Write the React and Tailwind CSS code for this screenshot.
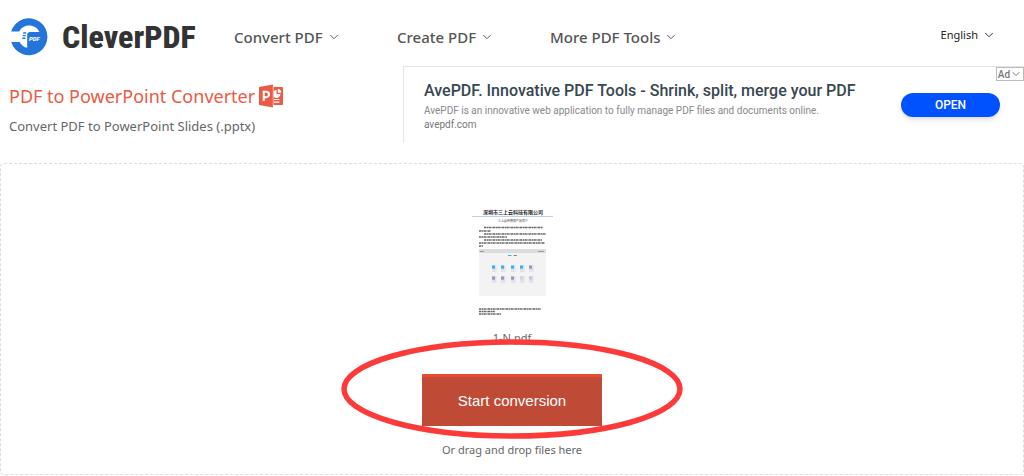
import { ChevronDown } from 'lucide-react';

const navItems = [
  { label: 'Convert PDF', href: '#convert', width: 'w-[163px]' },
  { label: 'Create PDF', href: '#create', width: 'w-[153px]' },
  { label: 'More PDF Tools', href: '#tools', width: 'w-auto' },
];

// file tiles in the document preview: x, y, fill
const previewTiles = [
  [492, 264, '#3bb3e8'], [501, 264, '#3bb3e8'], [511, 264, '#3bb3e8'], [520, 264, '#3bb3e8'], [529, 264, '#a48fc4'],
  [492, 275, '#a48fc4'], [501, 275, '#a48fc4'], [511, 275, '#a48fc4'], [520, 275, '#d5d5dc'], [529, 275, '#c9c0da'],
];

// paragraph lines in the document preview: x, y, length
const previewLines = [
  [484, 226.5, 59], [479, 230, 12], [484, 233, 62], [479, 236, 28],
  [484, 239, 58], [479, 242, 66], [479, 245, 4],
  [479, 308, 62], [479, 310.5, 16], [479, 313, 22],
];

function Logo() {
  return (
    <svg viewBox="0 0 38 38" className="h-[38px] w-[38px] shrink-0" aria-hidden="true">
      <path
        d="M1.2 13.5A18.5 18.5 0 1 1 1.2 24H9.6C11 27 14 29.4 17.2 29.8V17Q17.2 13.9 20.3 13.9H29.4C27.4 10 23.8 7.6 19 7.6C14.6 7.6 11 10 9.2 13.5Z"
        fill="#2474dc"
      />
      <path d="M13.2 15h3M12.8 17.6h3M12.4 20.2h3" stroke="#2474dc" strokeWidth="1.4" />
      <text x="19" y="22.5" fontSize="6" className="fill-white font-['Roboto',sans-serif] font-black italic">PDF</text>
    </svg>
  );
}

function PowerPointIcon() {
  return (
    <svg viewBox="0 0 24 24" className="h-6 w-6 shrink-0" aria-hidden="true">
      <path d="M14 3h9.2a.8.8 0 0 1 .8.8v16.4a.8.8 0 0 1-.8.8H14z" fill="#ea5a45" />
      <path d="M0 3L14 .5v23L0 21z" fill="#ea5a45" />
      <path d="M14.2 2v20" stroke="#fff" strokeWidth="0.6" />
      <path d="M17.5 6v4h4a4 4 0 0 1-6.8 2.8V7.2A4 4 0 0 1 17.5 6z" fill="#fff" />
      <path d="M18.8 5a3.8 3.8 0 0 1 3.5 3.7h-3.5z" fill="#fff" />
      <path d="M15 15.5h5.5M15 18.2h5.5" stroke="#fff" strokeWidth="1.2" />
      <path d="M4.7 17V7.8h2.6a2.6 2.6 0 0 1 0 5.4H4.7" fill="none" stroke="#fff" strokeWidth="2" />
    </svg>
  );
}

function DocumentPreview() {
  return (
    <svg viewBox="471 203 82 118" className="h-[118px] w-[82px]" role="img" aria-label="Preview of 1-N.pdf">
      <g className="font-['Noto_Sans_CJK_SC',sans-serif]" textAnchor="middle">
        <text x="513" y="213" fontSize="5" className="fill-[#222] font-bold">深圳市三上云科技有限公司</text>
        <text x="513" y="221" fontSize="3" className="fill-[#444]">三上云转换器产品简介</text>
      </g>
      <path d="M472 215.5h81" stroke="#a9c1e4" strokeWidth="0.8" />
      {previewLines.map(([x, y, length]) => (
        <path key={y} d={`M${x} ${y}h${length}`} stroke="#666" strokeWidth="1.3" strokeDasharray="2.4 0.5 1.2 0.4" />
      ))}
      <rect x="479" y="248" width="67" height="47" fill="#f3f3f4" />
      <rect x="479" y="248" width="67" height="4" fill="#dcdcde" />
      <path d="M480 250.5h4M538 250.5h6" stroke="#888" strokeWidth="0.8" />
      <path d="M508 254.5h3.5" stroke="#3bb3e8" />
      <path d="M513.5 254.5h3.5" stroke="#888" />
      {previewTiles.map(([x, y, color]) => (
        <g key={`${x}-${y}`}>
          <rect x={x} y={y} width="4.5" height="5" fill="#d9e3ec" />
          <rect x={x} y={y + 0.5} width="3" height="3.2" fill={color} />
          <path d={`M${x} ${y + 6}h4.5`} stroke="#c4c4c8" strokeWidth="0.6" />
        </g>
      ))}
    </svg>
  );
}

export default function App() {
  return (
    <div className="min-h-screen bg-white font-['Noto_Sans',sans-serif] text-[#555]">
      <header className="flex h-[66px] items-center pt-2 pr-7 pl-[10px]">
        <a href="#home" className="flex w-[224px] items-center gap-[14px]">
          <Logo />
          <span className="font-['Roboto_Condensed','Liberation_Sans_Narrow',sans-serif] text-[32px] leading-9 font-extrabold text-[#333]">CleverPDF</span>
        </a>
        <nav className="flex flex-1">
          {navItems.map(({ label, href, width }) => (
            <a key={href} href={href} className={`flex items-center gap-1 text-[15px] font-medium ${width}`}>
              {label}
              <ChevronDown className="h-[14px] w-[14px]" strokeWidth={1.6} />
            </a>
          ))}
        </nav>
        <button type="button" className="flex items-center gap-1 pb-1 text-[11px] text-[#222]">
          English
          <ChevronDown className="h-[14px] w-[14px]" strokeWidth={1.6} />
        </button>
      </header>

      <section className="flex">
        <div className="w-[403px] shrink-0 pt-4 pl-[9px]">
          <h1 className="flex items-center gap-1 text-[18px] leading-7 text-[#ea5a45]">
            PDF to PowerPoint Converter
            <PowerPointIcon />
          </h1>
          <p className="mt-1 text-[13px] leading-6 text-[#666]">Convert PDF to PowerPoint Slides (.pptx)</p>
        </div>
        <aside className="relative flex h-[77px] flex-1 items-center justify-between border-t border-l border-[#e4e4e4] pr-6 pl-5 font-['Roboto',sans-serif]">
          <div>
            <h2 className="text-[16px] leading-6 font-medium text-[#37474f]">AvePDF. Innovative PDF Tools - Shrink, split, merge your PDF</h2>
            <p className="text-[10px] leading-4 text-[#888]">AvePDF is an innovative web application to fully manage PDF files and documents online.</p>
            <p className="text-[10px] leading-3 text-[#777]">avepdf.com</p>
          </div>
          <a href="#open" className="flex h-6 w-[99px] items-center justify-center rounded-full bg-[#0052ff] text-xs font-medium text-white shadow-md">OPEN</a>
          <button type="button" className="absolute top-0 right-0 flex h-[14px] w-7 items-center justify-center border border-[#bbb] text-[10px] font-medium text-[#777]">
            Ad
            <ChevronDown className="h-3 w-3" />
          </button>
        </aside>
      </section>

      <main className="mt-5 flex flex-col items-center rounded border border-dashed border-[#ddd] pt-10 pb-[14px]">
        <DocumentPreview />
        <p className="mt-2 text-[11px] leading-4 text-[#666]">1-N.pdf</p>
        <div className="relative mt-7">
          <button type="button" className="block h-[52px] w-[180px] border-t-[3px] border-[#e74c35] bg-[#bf4a36] font-['Liberation_Sans',sans-serif] text-[15px] text-white">Start conversion</button>
          <svg
            viewBox="0 0 342 100"
            className="pointer-events-none absolute -top-[35px] left-1/2 h-[100px] w-[342px] max-w-none -translate-x-1/2"
            aria-hidden="true"
          >
            <ellipse cx="171" cy="50" rx="168" ry="47" fill="none" stroke="#fd3a3a" strokeWidth="5.5" />
          </svg>
        </div>
        <p className="mt-[14px] text-[11px] leading-5 text-[#666]">Or drag and drop files here</p>
      </main>
    </div>
  );
}
